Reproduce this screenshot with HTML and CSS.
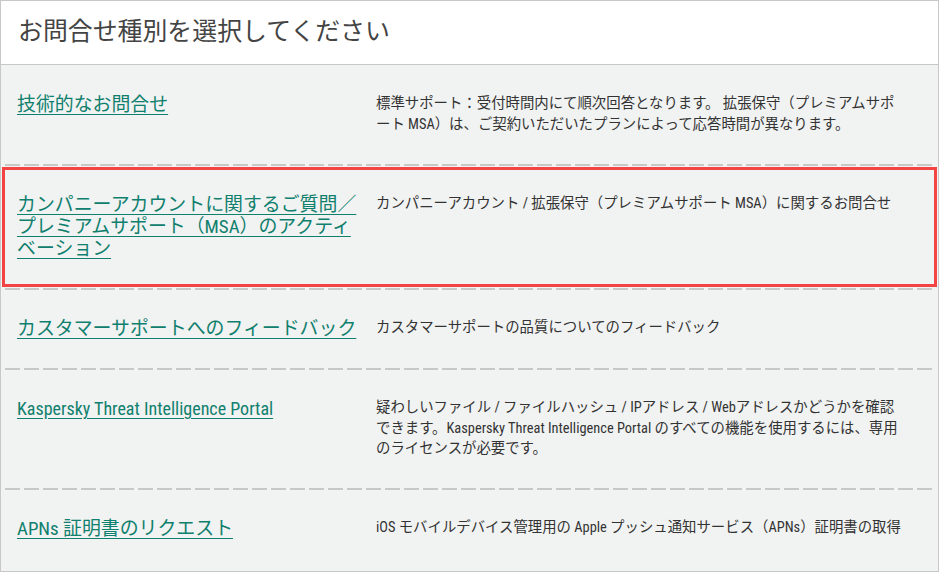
FILE: index.html
```html
<!DOCTYPE html>
<html lang="ja">
<head>
  <meta charset="UTF-8">
  <meta name="viewport" content="width=device-width, initial-scale=1.0">
  <title>お問合せ種別を選択してください</title>
  <link rel="stylesheet" href="styles.css">
</head>
<body>

<div class="panel">
  <div class="panel-head">
    <h1>お問合せ種別を選択してください</h1>
  </div>
  <div class="types">
    <div class="type first">
      <a href="#" class="type-link">技術的なお問合せ</a>
      <p class="type-desc">標準サポート：受付時間内にて順次回答となります。 拡張保守（プレミアムサポート MSA）は、ご契約いただいたプランによって応答時間が異なります。</p>
    </div>
    <div class="rule"></div>
    <div class="type selected">
      <a href="#" class="type-link">カンパニーアカウントに関するご質問／プレミアムサポート（MSA）のアクティベーション</a>
      <p class="type-desc">カンパニーアカウント / 拡張保守（プレミアムサポート MSA）に関するお問合せ</p>
    </div>
    <div class="rule"></div>
    <div class="type">
      <a href="#" class="type-link">カスタマーサポートへのフィードバック</a>
      <p class="type-desc">カスタマーサポートの品質についてのフィードバック</p>
    </div>
    <div class="rule"></div>
    <div class="type">
      <a href="#" class="type-link latin">Kaspersky Threat Intelligence Portal</a>
      <p class="type-desc">疑わしいファイル / ファイルハッシュ / IPアドレス / Webアドレスかどうかを確認できます。Kaspersky Threat Intelligence Portal のすべての機能を使用するには、専用のライセンスが必要です。</p>
    </div>
    <div class="rule"></div>
    <div class="type">
      <a href="#" class="type-link">APNs 証明書のリクエスト</a>
      <p class="type-desc">iOS モバイルデバイス管理用の Apple プッシュ通知サービス（APNs）証明書の取得</p>
    </div>
  </div>
</div>

</body>
</html>
```

FILE: styles.css
```css
body {
  margin: 0;
  font-family: "Roboto Condensed", "Noto Sans CJK JP", sans-serif;
  color: #333;
  background: #fff;
}
.panel {
  width: 939px;
  height: 572px;
  box-sizing: border-box;
  border: 1px solid #c8c8c8;
  background: #f1f2f2;
  overflow: hidden;
}
.panel-head {
  height: 63px;
  background: #fff;
  border-bottom: 1px solid #c8c8c8;
  display: flex;
  align-items: center;
  padding-left: 17px;
}
.panel-head h1 {
  margin: 0;
  font-size: 24.9px;
  font-weight: normal;
  color: #444;
  line-height: 1;
}
.type {
  display: flex;
  padding: 28px 17px 28px 16px;
}
.type.first {
  padding-top: 29px;
  padding-bottom: 29px;
}
.type.selected {
  outline: 3px solid #f44343;
  outline-offset: -4px;
}
.type-link {
  flex: 0 0 349px;
  padding-right: 10px;
  font-size: 18.9px;
  line-height: 22px;
  color: #0f806d;
  text-decoration: underline;
  text-underline-offset: 3px;
}
.type-link.latin {
  font-size: 18px;
}
.type-link + .type-desc {
  flex: 0 0 531.7px;
}
.type-desc {
  margin: 0;
  font-size: 14.4px;
  line-height: 20.5px;
  color: #333;
}
.rule {
  height: 2px;
  margin: 0 3px 0 4px;
  background: repeating-linear-gradient(90deg, #c8c8c8 0 15px, transparent 15px 19px);
}
```
